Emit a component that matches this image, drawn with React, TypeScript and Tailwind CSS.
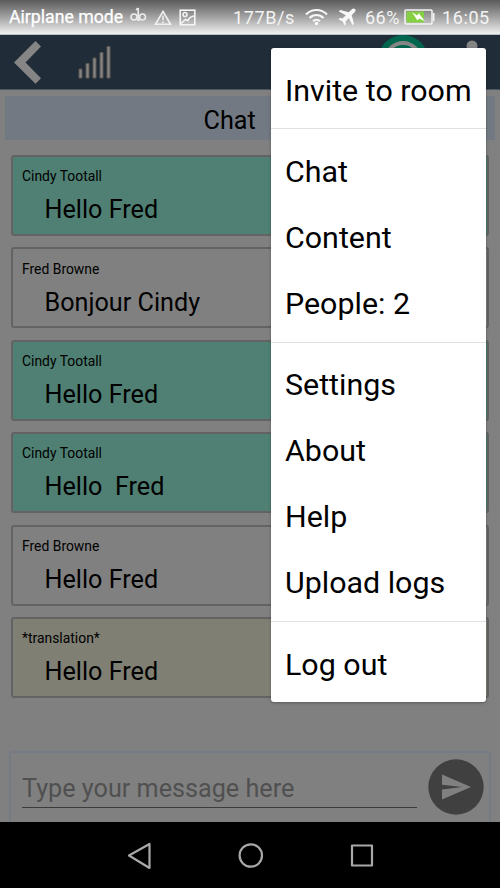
import React from "react";

type Message = { author: string; text: string; tone: string };

const messages: Message[] = [
  { author: "Cindy Tootall", text: "Hello Fred", tone: "bg-[#4f8073]" },
  { author: "Fred Browne", text: "Bonjour Cindy", tone: "bg-[#808080]" },
  { author: "Cindy Tootall", text: "Hello Fred", tone: "bg-[#4f8073]" },
  { author: "Cindy Tootall", text: "Hello  Fred", tone: "bg-[#4f8073]" },
  { author: "Fred Browne", text: "Hello Fred", tone: "bg-[#808080]" },
  { author: "*translation*", text: "Hello Fred", tone: "bg-[#7f7f74]" },
];

const menuGroups: string[][] = [
  ["Invite to room"],
  ["Chat", "Content", "People: 2"],
  ["Settings", "About", "Help", "Upload logs"],
  ["Log out"],
];

function StatusBar() {
  return (
    <div className="flex h-[35px] shrink-0 items-center border-b border-[#b9c2c8] bg-linear-to-b from-[#5b5b5b] via-[#a2a2a2] to-[#f0f0f0] pl-[9px] pr-[8px] text-[18px] leading-none text-[#f4f4f4]">
      <span className="mt-[2px] w-[121px] whitespace-nowrap text-[17.7px] text-white [-webkit-text-stroke:0.25px_white]">Airplane mode</span>
      <svg className="-mt-[4px] h-[16px] w-[17px] shrink-0" viewBox="0 0 17 16" fill="none" stroke="#ececec" strokeWidth="1.6">
        <circle cx="4" cy="10" r="3" />
        <circle cx="12.5" cy="10" r="3" />
        <path d="M6.9 13.2h3M8.2 1v12M6 2.8 8.2 1" />
      </svg>
      <svg className="ml-[7px] mt-px h-[16px] w-[18px] shrink-0" viewBox="0 0 18 16" fill="none" stroke="#f0f0f0" strokeWidth="1.6">
        <path d="M9 1.5 16.5 14.3h-15zM9 5.5v4.8M9 11.4v1.5" />
      </svg>
      <svg className="ml-[7px] h-[17px] w-[17px] shrink-0" viewBox="0 0 17 17" fill="none" stroke="#f4f4f4" strokeWidth="1.6">
        <rect x="1.2" y="1.2" width="14.6" height="14.6" />
        <circle cx="6" cy="5.5" r="2" />
        <path d="m2 14.5 4.5-4 2.5 1.2C10 8.5 12 7.5 15 7" />
      </svg>
      <span className="ml-[37px] mt-[2px] w-[72px] whitespace-nowrap tracking-[0.6px]">177B/s</span>
      <svg className="h-[18px] w-[23px] shrink-0" viewBox="0 0 23 18" fill="none" stroke="#f6f6f6" strokeWidth="2.2">
        <path d="M1 6.5C7 .5 16 .5 22 6.5M4.5 10C8.5 6 14.5 6 18.5 10M8 13.3c2-2 5-2 7 0" />
        <circle cx="11.5" cy="15.5" r="1.7" fill="#fff" stroke="none" />
      </svg>
      <svg className="ml-[10px] h-[18px] w-[18px] shrink-0" viewBox="0 0 18 18" fill="#f8f8f8">
        <path d="M17 1c-1-1-2.3-.6-3.3.4L10.8 4.3 2.2 2 .8 3.4l7 3.8-3.2 3.3L1.8 10 .5 11.3 4.6 13.4 6.7 17.5 8 16.2l-.5-2.8 3.3-3.2 3.8 7L16 15.8 13.7 7.2l2.9-2.9C17.6 3.3 18 2 17 1z" />
      </svg>
      <span className="ml-[9px] mt-[2px] w-[39px] whitespace-nowrap tracking-[0.5px]">66%</span>
      <svg className="h-[16px] w-[31px] shrink-0" viewBox="0 0 31 16">
        <rect x="1" y="1" width="27" height="14" rx="1" fill="none" stroke="#f3f3f3" strokeWidth="1.5" />
        <path d="M29 4h1.5v8H29z" fill="#f3f3f3" />
        <path d="M2.5 2.5H20v11H2.5z" fill="#85cf43" />
        <path d="m8 3.3 5.1 3.1 1.7-2.2 6.1 8-5.8-2.8-1.6 2.1z" fill="#fff" />
      </svg>
      <span className="ml-[7px] mt-[2px] whitespace-nowrap tracking-[0.6px]">16:05</span>
    </div>
  );
}

function Header() {
  return (
    <header className="flex h-[55px] shrink-0 items-start border-b border-[#4b5661] bg-[#202d39] pl-[14px]">
      <svg className="mt-[5px] h-[45px] w-[28px]" viewBox="0 0 28 45" fill="#858585">
        <path d="m21.5 1 5.5 5.5L11.5 22.5 27 38.3l-5.5 5.4L0 22.5z" />
      </svg>
      <svg className="ml-[36px] mt-[10px] h-[34px] w-[34px]" viewBox="0 0 34 34" fill="#858585" stroke="#5d5752">
        <path d="M1 24h3v9H1zM8 18.5h3V33H8zM15 13h3v20h-3zM22 7.5h3V33h-3zM29 1.5h3V33h-3z" />
      </svg>
      <svg className="ml-auto h-[50px] w-[50px]" viewBox="0 0 50 50">
        <circle cx="25" cy="25" r="25" fill="#00664d" />
        <circle cx="25" cy="25" r="17" fill="none" stroke="#858585" strokeWidth="4" />
      </svg>
      <svg className="ml-[38px] mr-[22px] mt-[5px] h-[44px] w-[12px]" viewBox="0 0 12 44" fill="#858585">
        <circle cx="6" cy="6" r="5.5" />
        <circle cx="6" cy="22" r="5.5" />
        <circle cx="6" cy="38" r="5.5" />
      </svg>
    </header>
  );
}

function MessageCard({ author, text, tone }: Message) {
  return (
    <article className={`h-[81px] rounded-[3px] border-2 border-[#636363] pl-[9px] ${tone}`}>
      <p className="mt-[10.3px] text-[13.9px] leading-[18px]">{author}</p>
      <p className="ml-[22.5px] mt-[9.9px] whitespace-pre text-[25.2px] leading-[30px]">{text}</p>
    </article>
  );
}

function Composer() {
  return (
    <div className="mx-[9px] mt-auto flex h-[71px] shrink-0 items-start rounded-t-[3px] border-2 border-b-0 border-[#747b85] pl-[11px] pr-[5.5px]">
      <div className="mt-[18px] h-[37px] w-[395px] border-b border-[#3c3c3c] text-[25.2px] leading-[36px] text-[#505050]">
        Type your message here
      </div>
      <svg className="ml-auto mt-[6px] h-[56px] w-[56px]" viewBox="0 0 56 56">
        <circle cx="28" cy="28" r="27.7" fill="#404040" />
        <path d="M14 15.5 43 28 14 40.5v-10L34 28l-20-2.3z" fill="#808080" />
      </svg>
    </div>
  );
}

function NavBar() {
  return (
    <nav className="h-[66px] shrink-0 bg-black">
      <svg className="h-[66px] w-full" viewBox="0 0 500 66" fill="none" stroke="#a8a8a8" strokeWidth="2.2" strokeLinejoin="round">
        <path d="M149.5 22v24L129 33.5z" />
        <circle cx="250.8" cy="33.5" r="11.2" />
        <rect x="352" y="23.5" width="20" height="20" />
      </svg>
    </nav>
  );
}

function Menu() {
  return (
    <div className="absolute left-[271px] top-[48px] h-[654px] w-[215px] rounded-[3px] bg-white text-[30.4px] shadow-[0_1px_3px_rgba(0,0,0,0.3)]">
      {menuGroups.map((items, index) => (
        <div
          key={items[0]}
          className={index === 0 ? "pb-[5px] pt-[9.4px]" : "border-t border-[#e0e0e0] pb-[5.4px] pt-[9.1px]"}
        >
          {items.map((item) => (
            <div key={item} className="flex h-[66px] items-center whitespace-nowrap pl-[14px]">
              {item}
            </div>
          ))}
        </div>
      ))}
    </div>
  );
}

export default function App() {
  return (
    <div className="relative flex h-[888px] w-[500px] flex-col overflow-hidden bg-[#808080] font-[Roboto,sans-serif] text-black">
      <StatusBar />
      <Header />
      <h1 className="mx-[5px] mt-[6px] h-[44px] shrink-0 bg-[#737982] pl-[198.5px] text-[25.2px] leading-[49px]">Chat</h1>
      <main className="ml-[11px] mr-[11px] mt-[15px] flex flex-col gap-[11.4px]">
        {messages.map((message, index) => (
          <MessageCard key={index} {...message} />
        ))}
      </main>
      <Composer />
      <NavBar />
      <Menu />
    </div>
  );
}
